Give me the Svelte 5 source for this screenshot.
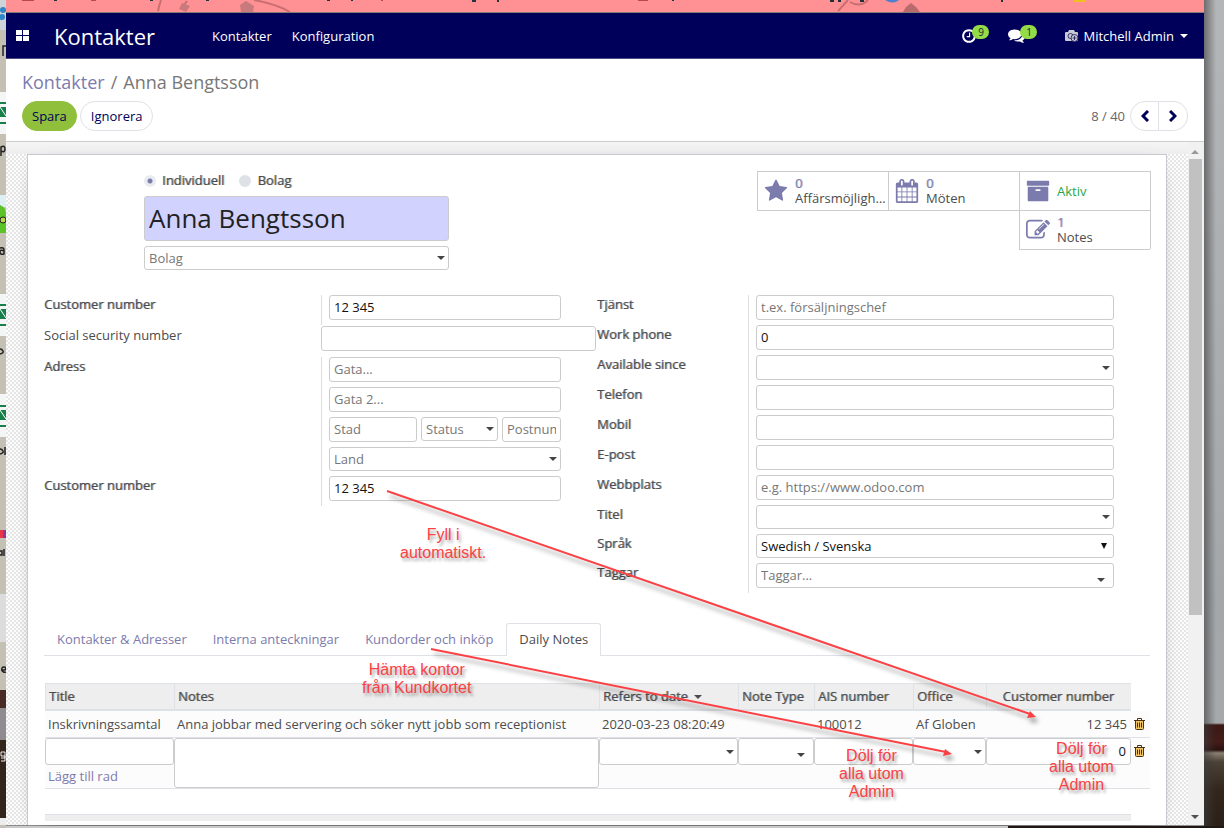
<script>
  const paths = {
    star: 'M1728 647q0 22-26 48l-363 354 86 500q1 7 1 20 0 21-10.5 35.5t-30.5 14.5q-19 0-40-12l-449-236-449 236q-22 12-40 12-21 0-31.5-14.5t-10.5-35.5q0-6 2-20l86-500-364-354q-25-27-25-48 0-37 56-46l502-73 225-455q19-41 49-41t49 41l225 455 502 73q56 9 56 46z',
    calendar: 'M192 1664h288v-288h-288v288zm352 0h320v-288h-320v288zm-352-352h288v-320h-288v320zm352 0h320v-320h-320v320zm-352-384h288v-288h-288v288zm736 736h320v-288h-320v288zm-384-736h320v-288h-320v288zm768 736h288v-288h-288v288zm-384-352h320v-320h-320v320zm-352-864v-288q0-13-9.5-22.5t-22.5-9.5h-64q-13 0-22.5 9.5t-9.5 22.5v288q0 13 9.5 22.5t22.5 9.5h64q13 0 22.5-9.5t9.5-22.5zm736 864h288v-320h-288v320zm-384-384h320v-288h-320v288zm384 0h288v-288h-288v288zm32-480v-288q0-13-9.5-22.5t-22.5-9.5h-64q-13 0-22.5 9.5t-9.5 22.5v288q0 13 9.5 22.5t22.5 9.5h64q13 0 22.5-9.5t9.5-22.5zm384-64v1280q0 52-38 90t-90 38h-1408q-52 0-90-38t-38-90v-1280q0-52 38-90t90-38h128v-96q0-66 47-113t113-47h64q66 0 113 47t47 113v96h384v-96q0-66 47-113t113-47h64q66 0 113 47t47 113v96h128q52 0 90 38t38 90z',
    archive: 'M1088 832q0-26-19-45t-45-19h-256q-26 0-45 19t-19 45 19 45 45 19h256q26 0 45-19t19-45zm576-192v960q0 26-19 45t-45 19h-1408q-26 0-45-19t-19-45v-960q0-26 19-45t45-19h1408q26 0 45 19t19 45zm64-448v256q0 26-19 45t-45 19h-1536q-26 0-45-19t-19-45v-256q0-26 19-45t45-19h1536q26 0 45 19t19 45z',
    edit: 'M888 1184l116-116-152-152-116 116v56h96v96h56zm440-720q-16-16-33 1l-350 350q-17 17-1 33t33-1l350-350q17-17 1-33zm80 594v190q0 119-84.5 203.5t-203.5 84.5h-832q-119 0-203.5-84.5t-84.5-203.5v-832q0-119 84.5-203.5t203.5-84.5h832q63 0 117 25 15 7 18 23 3 17-9 29l-49 49q-14 14-32 8-23-6-45-6h-832q-66 0-113 47t-47 113v832q0 66 47 113t113 47h832q66 0 113-47t47-113v-126q0-13 9-22l64-64q15-15 35-7t20 29zm-96-738l288 288-672 672h-288v-288zm444 132l-92 92-288-288 92-92q28-28 68-28t68 28l152 152q28 28 28 68t-28 68z',
    comments: 'M1408 768q0 139-94 257t-256.5 186.5-353.5 68.5q-86 0-176-16-124 88-278 128-36 9-86 16h-3q-11 0-20.5-8t-11.5-21q-1-3-1-6.5t.5-6.5 2-6l2.5-5 3.5-5.5 4-5 4.5-5 4-4.5q5-6 23-25t26-29.5 22.5-29 25-38.5 20.5-44q-124-72-195-177t-71-224q0-139 94-257t256.5-186.5 353.5-68.5 353.5 68.5 256.5 186.5 94 257zm384 256q0 120-71 224.5t-195 176.5q10 24 20.5 44t25 38.5 22.5 29 26 29.5 23 25q1 1 4 4.5t4.5 5 4 5 3.5 5.5l2.500 5 2 6 .5 6.500-1 6.500q-3 14-13 22t-22 7q-50-7-86-16-154-40-278-128-90 16-176 16-271 0-472-132 58 4 88 4 161 0 309-45t264-129q125-92 192-212t67-254q0-77-23-152 129 71 204 178t75 230z',
    clock: 'M1024 544v448q0 14-9 23t-23 9h-320q-14 0-23-9t-9-23v-64q0-14 9-23t23-9h224v-352q0-14 9-23t23-9h64q14 0 23 9t9 23zm416 352q0-148-73-273t-198-198-273-73-273 73-198 198-73 273 73 273 198 198 273 73 273-73 198-198 73-273zm224 0q0 209-103 385.5t-279.5 279.5-385.5 103-385.5-103-279.5-279.5-103-385.5 103-385.5 279.5-279.5 385.5-103 385.5 103 279.5 279.5 103 385.5z'
  };

  const stats = [
    { icon: 'star', value: '0', label: 'Affärsmöjligheter' },
    { icon: 'calendar', value: '0', label: 'Möten' },
    { icon: 'archive', state: 'Aktiv' },
    { icon: 'edit', value: '1', label: 'Notes' }
  ];

  const details = [
    { id: 'function', label: 'Tjänst', type: 'text', hint: 't.ex. försäljningschef' },
    { id: 'workphone', label: 'Work phone', type: 'text', value: '0' },
    { id: 'available', label: 'Available since', type: 'select' },
    { id: 'phone', label: 'Telefon', type: 'text' },
    { id: 'mobile', label: 'Mobil', type: 'text' },
    { id: 'email', label: 'E-post', type: 'text' },
    { id: 'website', label: 'Webbplats', type: 'text', hint: 'e.g. https://www.odoo.com' },
    { id: 'title', label: 'Titel', type: 'select', low: true },
    { id: 'lang', label: 'Språk', type: 'select', low: true, kind: 'native', value: 'Swedish / Svenska' },
    { id: 'tags', label: 'Taggar', type: 'select', kind: 'tags', hint: 'Taggar...' }
  ];

  const tabs = ['Kontakter & Adresser', 'Interna anteckningar', 'Kundorder och inköp', 'Daily Notes'];
  let active = $state('Daily Notes');
  let kind = $state('person');
</script>

{#snippet icon(name, size)}
  <svg class="icon" width={size} height={size} viewBox="0 0 1792 1792" aria-hidden="true"><path fill="currentColor" d={paths[name]} /></svg>
{/snippet}

{#snippet trash()}
  <svg width="11" height="12" viewBox="0 0 11 12" aria-hidden="true">
    <path d="M2 3h7v8H2z" fill="#f2c566" />
    <path d="M3.5 2.5v-2h4v2M0 2.5h11M1.5 3v7.500q0 1 1 1h6q1 0 1-1V3M3.500 4.500v5M5.500 4.500v5M7.500 4.500v5" fill="none" stroke="#4a3210" />
  </svg>
{/snippet}

<div class="desktop">
  <svg class="wallpaper" viewBox="0 0 6 828" preserveAspectRatio="none" aria-hidden="true">
    <rect width="6" height="828" fill="#c4c0b4" />
    <rect width="6" height="30" fill="#cfd4d8" />
    <circle cx="3" cy="10" r="3" fill="#2c86c8" /><circle cx="2" cy="17" r="3" fill="#2c86c8" />
    <g fill="none" stroke="#222" stroke-width="1.500"><path d="M3 56V46h3M1 156v-9q4-2 4 2t-4 2M0 248q4-1 4 2v4q-4 1-4-2t4-1M0 354q4-1 3-3t-3-2M0 454q4-1 3-3t-3-2M5 455v-8M4 549v7M0 551h2v4H0M2 671q-1-4 2-4t1 3H2q1 3 4 2" /></g>
    <g fill="#f4f6f5"><path d="M0 92h6v42H0zM0 294h6v42H0zM0 394h6v43H0z" /></g>
    <g fill="#17804a"><path d="M0 102h6v2H0zM0 107h6v10H0zM0 122h6v2H0zM0 304h6v2H0zM0 309h6v10H0zM0 324h6v2H0zM0 405h6v2H0zM0 410h6v10H0zM0 425h6v2H0z" /></g>
    <path d="M0 107l6 9M0 309l6 9M0 410l6 9" stroke="#fff" />
    <path d="M0 195h6v12H0z" fill="#dff0f4" />
    <path d="M0 205q6 2 6 10v18H0z" fill="#5cc22a" />
    <circle cx="3" cy="220" r="3" fill="#b5d64a" stroke="#222" />
    <path d="M0 530h3v8H0z" fill="#e8334a" /><path d="M3 530h3v8H3z" fill="#8a3a94" />
    <path d="M0 594h6v48H0z" fill="#dcdcdc" />
    <path d="M0 690h6v18H0z" fill="#4a2a24" /><path d="M0 708h6v32H0z" fill="#8e8c8e" />
    <path d="M0 740h6v78H0z" fill="#33241c" /><path d="M1 758h4v-6H1v4h4v5H1" fill="none" stroke="#eee" /><path d="M0 818h6v7H0z" fill="#eee" />
  </svg>

  <div class="window">
    <div class="browser">
      <svg width="720" height="12" viewBox="0 0 720 12" aria-hidden="true">
        <g fill="none" stroke="#c96f72" stroke-width="2"><path d="M155 0q-2 6-3 11M181 1l-6 8M248 0q22 4 36 12" /></g>
        <path d="M176 3l8 3-4 6-7-3zM234 5l6-4 8 5-1 6h-12z" fill="#c97a7c" />
        <g fill="#b9494e"><path d="M16 0h12v1H16zM85 0h5v1h-5zM375 0h2v1h-2zM632 0h10v1h-10z" /></g>
        <g fill="#22313a"><path d="M48 0h3v1h-3zM144 0h3v1h-3zM200 0h3v1h-3zM321 0h3v1h-3zM345 0h2v1h-2zM466 0h4v2h-4zM491 0h2v2h-2zM666 0h2v1h-2z" /></g>
      </svg>
      <svg width="380" height="12" viewBox="0 0 380 12" aria-hidden="true">
        <path d="M24 0l-10 11M26 2q10 6 18-2" fill="none" stroke="#c96f72" stroke-width="2" />
        <path d="M79 12l3-5 5-4 5 4 4 5z" fill="#b96a6c" />
        <path d="M6 0h4v2H6zM14 0h3v2h-3zM36 0h4v2h-4zM177 0h2v2h-2z" fill="#1c3238" />
        <path d="M61 0q8 5 14 0z" fill="#4f7fd0" /><path d="M250 0h12v2h-12z" fill="#f0c020" />
      </svg>
    </div>

    <nav class="navbar">
      <button class="apps" aria-label="Apps">
        <svg width="13" height="11" viewBox="0 0 13 11" aria-hidden="true"><path d="M0 0h6v5H0zM7 0h6v5H7zM0 6h6v5H0zM7 6h6v5H7z" fill="#fff" /></svg>
      </button>
      <a class="brand" href="#kontakter">Kontakter</a>
      <a class="entry" href="#kontakter">Kontakter</a>
      <a class="entry" href="#konfiguration">Konfiguration</a>
      <div class="systray">
        <button class="tray">{@render icon('clock', 16)}<span class="badge">9</span></button>
        <button class="tray chat">{@render icon('comments', 17)}<span class="badge">1</span></button>
        <button class="user">
          <svg width="14" height="12" viewBox="0 0 14 12" aria-hidden="true">
            <path d="M0 3q0-1 1-1h2l1-2h5l1 2h2q1 0 1 1v7q0 1-1 1H1q-1 0-1-1z" fill="#c9c9d3" />
            <circle cx="5.500" cy="6" r="2.500" fill="none" stroke="#33336b" />
            <circle cx="9.500" cy="8" r="3.500" fill="#c9c9d3" stroke="#33336b" />
            <path d="M9.500 6v4M7.500 8h4" stroke="#33336b" />
          </svg>
          Mitchell Admin<span class="caret"></span>
        </button>
      </div>
    </nav>

    <header class="control">
      <div class="crumbs"><a href="#kontakter">Kontakter</a><span>/</span><span>Anna Bengtsson</span></div>
      <div class="actions">
        <button class="pill save">Spara</button>
        <button class="pill">Ignorera</button>
        <div class="pager">
          <span>8 / 40</span>
          <button class="pill prev" aria-label="Föregående"><svg width="8" height="12" viewBox="0 0 8 12" aria-hidden="true"><path d="M7 1L2 6l5 5" /></svg></button>
          <button class="pill next" aria-label="Nästa"><svg width="8" height="12" viewBox="0 0 8 12" aria-hidden="true"><path d="M1 1l5 5-5 5" /></svg></button>
        </div>
      </div>
    </header>

    <div class="content">
      <main class="canvas">
        <section class="sheet">
          <div class="top">
            <div class="identity">
              <div class="radios">
                <label><input type="radio" name="kind" value="person" bind:group={kind} />Individuell</label>
                <label><input type="radio" name="kind" value="company" bind:group={kind} />Bolag</label>
              </div>
              <input class="name" aria-label="Namn" value="Anna Bengtsson" />
              <select class="low hint" aria-label="Bolag"><option>Bolag</option></select>
            </div>
            <div class="stats">
              {#each stats as s}
                <button class="stat">
                  {@render icon(s.icon, 24)}
                  {#if s.state}
                    <span class="on">{s.state}</span>
                  {:else}
                    <span class="info"><b>{s.value}</b><span>{s.label}</span></span>
                  {/if}
                </button>
              {/each}
            </div>
          </div>

          <div class="groups">
            <div class="group left">
              <div class="row">
                <label for="cust1">Customer number</label>
                <div class="field"><input id="cust1" value="12 345" /></div>
              </div>
              <div class="row wide">
                <label for="ssn">Social security number</label>
                <input id="ssn" />
              </div>
              <div class="row">
                <label for="street">Adress</label>
                <div class="field address">
                  <input id="street" placeholder="Gata..." />
                  <input aria-label="Gata 2" placeholder="Gata 2..." />
                  <div class="city">
                    <input aria-label="Stad" placeholder="Stad" />
                    <select class="low hint" aria-label="Status"><option>Status</option></select>
                    <input aria-label="Postnummer" placeholder="Postnummer" />
                  </div>
                  <select class="low hint" aria-label="Land"><option>Land</option></select>
                </div>
              </div>
              <div class="row">
                <label for="cust2">Customer number</label>
                <div class="field"><input id="cust2" value="12 345" /></div>
              </div>
            </div>

            <div class="group right">
              {#each details as d}
                <div class="row">
                  <label for={d.id}>{d.label}</label>
                  <div class="field">
                    {#if d.type === 'select'}
                      <select id={d.id} class={[d.kind, d.low && 'low', d.hint && 'hint']}><option>{d.value ?? d.hint ?? ''}</option></select>
                    {:else}
                      <input id={d.id} value={d.value ?? ''} placeholder={d.hint ?? ''} />
                    {/if}
                  </div>
                </div>
              {/each}
            </div>
          </div>

          <div class="tabs" role="tablist">
            {#each tabs as t}
              <button role="tab" aria-selected={t === active} class:active={t === active} onclick={() => (active = t)}>{t}</button>
            {/each}
          </div>

          <table>
            <colgroup>
              <col class="c-title" /><col /><col class="c-date" /><col class="c-type" /><col class="c-ais" /><col class="c-office" /><col class="c-cust" /><col class="c-del" />
            </colgroup>
            <thead>
              <tr>
                <th>Title</th><th>Notes</th><th>Refers to date<span class="caret sort"></span></th><th>Note Type</th><th>AIS number</th><th>Office</th><th class="num">Customer number</th><td></td>
              </tr>
            </thead>
            <tbody>
              <tr class="line">
                <td>Inskrivningssamtal</td>
                <td>Anna jobbar med servering och söker nytt jobb som receptionist</td>
                <td>2020-03-23 08:20:49</td>
                <td></td>
                <td>100012</td>
                <td>Af Globen</td>
                <td class="num">12 345</td>
                <td class="del"><button aria-label="Ta bort rad 1">{@render trash()}</button></td>
              </tr>
              <tr class="edit">
                <td><input aria-label="Title" /></td>
                <td rowspan="2"><textarea aria-label="Notes"></textarea></td>
                <td><select aria-label="Refers to date"><option></option></select></td>
                <td><select class="tags" aria-label="Note Type"><option></option></select></td>
                <td><input aria-label="AIS number" /></td>
                <td><select aria-label="Office"><option></option></select></td>
                <td><input class="num" aria-label="Customer number" value="0" /></td>
                <td class="del"><button aria-label="Ta bort rad 2">{@render trash()}</button></td>
              </tr>
              <tr class="add">
                <td><a href="#add">Lägg till rad</a></td>
                <td colspan="6"></td>
              </tr>
            </tbody>
          </table>
          <div class="footbar"></div>
        </section>
      </main>
      <div class="scrollbar" aria-hidden="true">
        <span class="arrow up"></span>
        <span class="thumb"></span>
        <span class="arrow down"></span>
      </div>
    </div>
  </div>

  <div class="side"></div>
  <div class="floor"></div>

  <svg class="arrows" width="1224" height="828" viewBox="0 0 1224 828" aria-hidden="true">
    <g fill="none" stroke="#fb4144" stroke-width="2">
      <path d="M387 491L1030 714" />
      <path d="M431 649L946 752" />
    </g>
    <path d="M1036 717l-9 1 3-7zM952 754l-9 2 2-7z" fill="#fb4144" />
  </svg>
  <p class="note n1">Fyll i<br />automatiskt.</p>
  <p class="note n2">Hämta kontor<br />från Kundkortet</p>
  <p class="note n3">Dölj för<br />alla utom<br />Admin</p>
  <p class="note n4">Dölj för<br />alla utom<br />Admin</p>
</div>

<style>
  :global(body) { margin: 0; }
  .desktop, .desktop * { box-sizing: border-box; }
  .desktop {
    position: relative;
    display: grid;
    grid-template-columns: 6px 1fr 20px;
    grid-template-rows: 1fr 2px;
    min-height: 100vh;
    overflow: hidden;
    background: #c9c9c9;
    font: 13px/20px "Open Sans", sans-serif;
    color: #4c4c4c;
  }
  .wallpaper { width: 6px; height: 100%; grid-row: 1 / 3; }
  .window { display: flex; flex-direction: column; min-width: 0; background: #fff; border-bottom: 1px solid #8e8e8e; }
  .side {
    background:
      linear-gradient(90deg, rgba(60, 60, 60, 0.6), rgba(60, 60, 60, 0) 12px),
      linear-gradient(#b4b5b7 0, #a3a7aa 600px, #a6a9ac 723px, #3a1916 725px, #441c18 742px, #2a1210 750px, #8b8172 753px, #4a4137 762px, #33261c 790px, #2a2018);
  }
  .floor { grid-column: 2 / 4; background: linear-gradient(90deg, #c9c9c9 0 1002px, #1e1713 1002px); }

  button, input, select, textarea { font: inherit; color: inherit; margin: 0; }
  button { background: none; border: 0; padding: 0; cursor: pointer; }
  a { color: #7c7bad; text-decoration: none; }
  svg { display: block; flex: none; }

  .browser { display: flex; justify-content: space-between; height: 13px; background: #ff9094; border-bottom: 1px solid #857a72; overflow: hidden; }
  .navbar { display: flex; align-items: center; height: 46px; padding: 0 16px 0 10px; background: #00005a; border-bottom: 1px solid #4a4a80; color: #fff; }
  .navbar a { color: #fff; }
  .brand { margin-left: 25px; font-size: 22px; line-height: 30px; }
  .entry { margin-left: 20px; }
  .brand + .entry { margin-left: 57px; }
  .systray { display: flex; align-items: center; margin-left: auto; }
  .tray { display: flex; align-items: center; margin-right: 19px; }
  .tray.chat { margin-right: 28px; }
  .badge { margin: -8px 0 0 -5px; width: 17px; height: 14px; border-radius: 7px; background: #94dc46; color: #223; font-size: 10px; line-height: 14px; text-align: center; }
  .user { display: flex; align-items: center; gap: 4px; }
  .caret { border: 4px solid transparent; border-top-color: currentColor; border-bottom: 0; }
  .user .caret { margin-left: 2px; }

  .control { display: flex; flex-direction: column; gap: 6px; height: 83px; padding: 11px 16px 0 16px; border-bottom: 1px solid #ccc; }
  .crumbs { display: flex; gap: 6px; font-size: 18px; line-height: 25px; color: #777; }
  .actions { display: flex; gap: 3px; }
  .pill { height: 30px; padding: 0 10px; border: 1px solid #dee2e6; border-radius: 15px; color: #00005a; background: #fff; }
  .save { padding: 0 9px; background: #8fbf3b; border-color: #8fbf3b; }
  .pager { display: flex; align-items: center; margin-left: auto; }
  .pager span { margin-right: 5px; color: #666; }
  .pager .pill { display: flex; align-items: center; justify-content: center; width: 29px; padding: 0; }
  .pager path { fill: none; stroke: #00005a; stroke-width: 3; }
  .pager .prev { border-radius: 15px 0 0 15px; }
  .pager .next { border-radius: 0 15px 15px 0; border-left: 0; }

  .content { display: flex; flex: 1; min-width: 0; background: linear-gradient(#f5f5f5, #ededed 12px, #f0f0f0 12px); }
  .canvas {
    flex: 1;
    min-width: 0;
    padding: 12px 21px 0;
    background-image: linear-gradient(#f5f5f5, #ededed), conic-gradient(#e6e6e6 25%, #fdfdfd 0 50%, #e6e6e6 0 75%, #fdfdfd 0);
    background-size: 100% 12px, 4px 4px;
    background-repeat: no-repeat, repeat;
  }
  .sheet { height: 100%; padding: 16px 16px 2px; background: #fff; border: 1px solid #c8c8d3; border-bottom: 0; box-shadow: 0 5px 20px -15px #000; }
  .scrollbar { display: flex; flex-direction: column; align-items: center; width: 16px; padding: 8px 2px 6px 0; background: #f1f1f1; }
  .arrow { border: 4px solid transparent; }
  .arrow.up { border-bottom-color: #999; border-top: 0; }
  .arrow.down { margin-top: auto; border-top-color: #505050; border-bottom: 0; }
  .thumb { width: 13px; height: 456px; margin-top: 5px; background: #c1c1c1; }

  .top { display: flex; justify-content: space-between; align-items: flex-start; padding-left: 100px; }
  .identity { display: flex; flex-direction: column; gap: 5px; width: 305px; }
  .radios { display: flex; gap: 15px; height: 20px; line-height: 18px; }
  .radios label, .row label, th, .info b { font-weight: 500; text-shadow: 1px 0 rgba(76, 76, 76, 0.55); }
  .radios label { display: flex; align-items: flex-start; gap: 6px; }
  .radios input { appearance: none; width: 12px; height: 12px; margin-top: 4px; border-radius: 50%; background: #dee2e6; }
  .radios input:checked { background: radial-gradient(circle, #7c7bad 0 2px, #e9ebef 3px); }

  input:not([type="radio"]), select, textarea { display: block; width: 100%; min-width: 0; height: 25px; padding: 0 4px 2px; border: 1px solid #ccc; border-radius: 3px; background: #fff; color: #111; }
  select { appearance: none; padding-bottom: 0; background: #fff url("data:image/svg+xml,%3Csvg xmlns='http://www.w3.org/2000/svg' width='8' height='4'%3E%3Cpath d='M0 0h8L4 4z' fill='%23444'/%3E%3C/svg%3E") no-repeat right 3px center; }
  select.tags { background-position: right 8px top 14px; padding-bottom: 2px; }
  select.native { background-image: url("data:image/svg+xml,%3Csvg xmlns='http://www.w3.org/2000/svg' width='6' height='6'%3E%3Cpath d='M0 0h6L3 6z' fill='%23111'/%3E%3C/svg%3E"); background-position: right 6px top 8px; }
  select.low { height: 24px; }
  select.hint, input::placeholder { color: #777; opacity: 1; }
  .identity input.name { height: 45px; font-size: 26px; background: #d2d2ff; color: #222; }

  .stats { display: grid; grid-template-columns: repeat(3, 131px); grid-auto-rows: 39px; }
  .stat { display: flex; align-items: center; gap: 7px; padding: 0 1px 0 7px; text-align: left; color: #7c7bad; box-shadow: inset 1px 0 #ccc, inset 0 1px #ccc, 1px 0 #ccc, 0 1px #ccc; }
  .stat:nth-child(4) { grid-column: 3; }
  .info { display: flex; flex-direction: column; min-width: 0; line-height: 15px; }
  .info b { text-shadow: 1px 0 rgba(124, 123, 173, 0.55); }
  .info span { margin: -2px 0; padding: 2px 0; color: #4c4c4c; overflow: hidden; text-overflow: ellipsis; white-space: nowrap; }
  .on { color: #28a745; }

  .groups { display: grid; grid-template-columns: 1fr 1fr; align-items: start; margin-top: 25px; }
  .left, .right { padding-right: 36px; }
  .row { display: grid; grid-template-columns: 277px 1fr; }
  .right .row { grid-template-columns: 151px 1fr; }
  .row label { line-height: 18px; }
  .field { padding: 0 0 5px 7px; border-left: 1px solid #ddd; }
  .wide { margin: 1px -35px 6px 0; }
  .row.wide label { font-weight: 400; text-shadow: none; }
  .address { display: flex; flex-direction: column; gap: 5px; }
  .city { display: grid; grid-template-columns: 88px 77px 1fr; gap: 4px; }

  .tabs { display: flex; margin-top: 30px; border-bottom: 1px solid #dee2e6; }
  .tabs button { height: 32px; padding: 0 12px 2px; border: 1px solid transparent; border-bottom: 0; color: #7c7bad; }
  .tabs .active { height: 33px; margin-bottom: -1px; border-color: #dee2e6; border-radius: 3px 3px 0 0; background: #fff; color: #4c4c4c; }

  table { width: 100%; margin-top: 27px; padding-left: 1px; table-layout: fixed; border-collapse: separate; border-spacing: 0; }
  .c-title { width: 129px; } .c-date { width: 139px; } .c-type { width: 76px; } .c-ais { width: 99px; } .c-office { width: 73px; } .c-cust { width: 145px; } .c-del { width: 19px; }
  th { height: 28px; padding: 0 3px 2px; background: #eee; border: 1px solid #dee2e6; border-width: 1px 0 2px 1px; text-align: left; white-space: nowrap; }
  th.num { padding-right: 17px; }
  .num { text-align: right; }
  td { padding: 0 3px; white-space: nowrap; }
  thead td { padding: 0; }
  .line td { height: 27px; padding: 0 4px 0 3px; border-bottom: 1px solid #dee2e6; background: #fcfcfc; }
  .edit td { height: 25px; padding: 0; vertical-align: top; background: #fcfcfc; }
  .edit td input:not([type="radio"]), .edit td select { height: 27px; margin-bottom: -2px; position: relative; }
  .edit textarea { height: 50px; resize: none; }
  .add td { height: 26px; border-bottom: 1px solid #dee2e6; background: #fcfcfc; }
  .edit td[rowspan] { border-bottom: 1px solid #dee2e6; }
  table .del { padding: 0 0 0 3px; vertical-align: middle; }
  .del button { display: block; }
  .caret.sort { display: inline-block; margin-left: 6px; border-width: 4px 4px 0; vertical-align: 2px; }
  .footbar { height: 7px; margin: 25px 19px 0 1px; background: #eee; border-top: 1px solid #dee2e6; }

  .arrows { position: absolute; left: 0; top: 0; pointer-events: none; filter: drop-shadow(3px 5px 2px rgba(0, 0, 0, 0.35)); }
  .note { position: absolute; margin: 0; color: #fb4144; font: 16px/18px "Liberation Sans", sans-serif; text-align: center; white-space: nowrap; text-shadow: 2px 3px 3px rgba(0, 0, 0, 0.35); pointer-events: none; }
  .n1 { left: 400px; top: 526px; }
  .n2 { left: 362px; top: 661px; }
  .n3 { left: 839px; top: 747px; }
  .n4 { left: 1049px; top: 740px; }
</style>
